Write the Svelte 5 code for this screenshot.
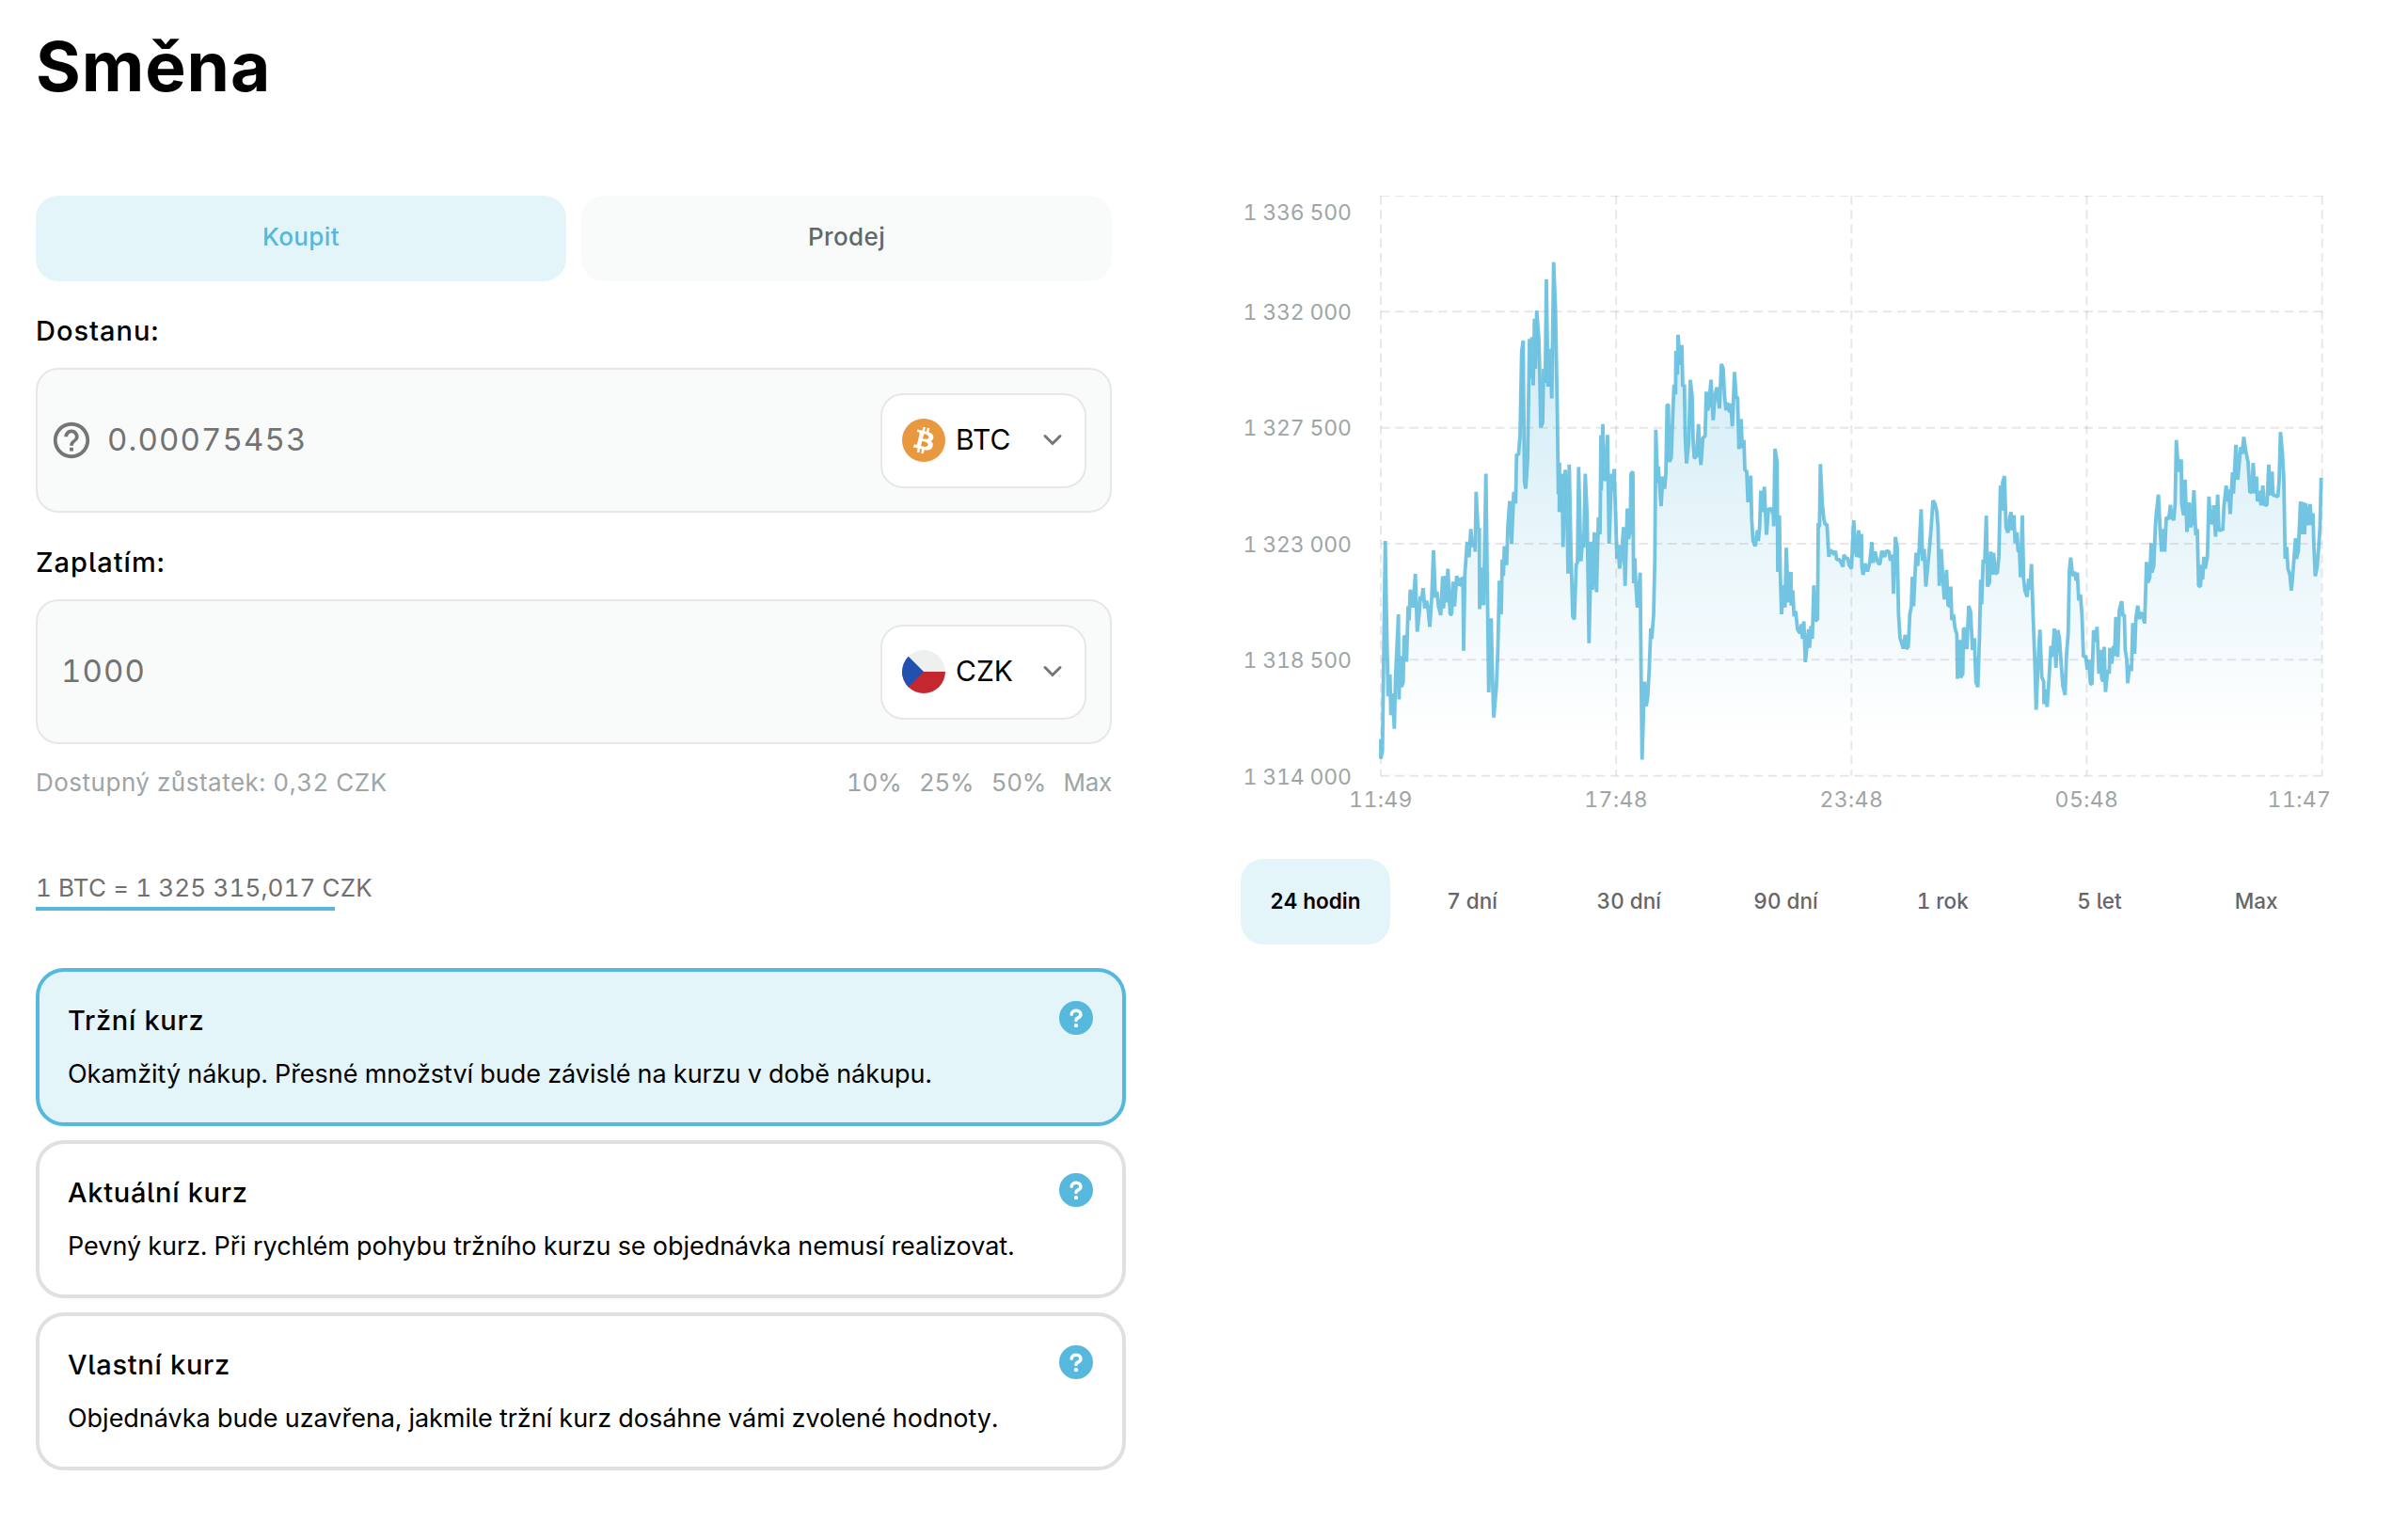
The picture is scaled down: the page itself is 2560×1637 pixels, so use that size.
<script>
	const options = [
		{
			id: 'market',
			title: 'Tržní kurz',
			text: 'Okamžitý nákup. Přesné množství bude závislé na kurzu v době nákupu.',
		},
		{
			id: 'current',
			title: 'Aktuální kurz',
			text: 'Pevný kurz. Při rychlém pohybu tržního kurzu se objednávka nemusí realizovat.',
		},
		{
			id: 'custom',
			title: 'Vlastní kurz',
			text: 'Objednávka bude uzavřena, jakmile tržní kurz dosáhne vámi zvolené hodnoty.',
		},
	];
	const ranges = ['24 hodin', '7 dní', '30 dní', '90 dní', '1 rok', '5 let', 'Max'];
	const shares = ['10%', '25%', '50%', 'Max'];

	let side = $state('buy');
	let option = $state('market');
	let range = $state('24 hodin');

	// plot area inside the chart svg
	const LEFT = 149;
	const WIDTH = 1000.7;
	const HEIGHT = 616.7;

	const yTicks = [
		{ label: '1 336 500', y: 0, textY: 26 },
		{ label: '1 332 000', y: 123.3, textY: 132.3 },
		{ label: '1 327 500', y: 246.7, textY: 255.3 },
		{ label: '1 323 000', y: 370, textY: 379 },
		{ label: '1 318 500', y: 493.3, textY: 502 },
		{ label: '1 314 000', y: 616.7, textY: 626 },
	];
	const xTicks = [
		{ label: '11:49', x: 0, textX: 0 },
		{ label: '17:48', x: 250.2, textX: 250.2 },
		{ label: '23:48', x: 500.3, textX: 500.3 },
		{ label: '05:48', x: 750.5, textX: 750.5 },
		{ label: '11:47', x: 1000.7, textX: 976.5 },
	];

	// samples of the last 24 hours, in four parts: x,y on a 3002 x 1465 grid
	const parts = [
		{
			start: -84,
			points:
				'84,1415 84,1465 89,1445 98,915 102,1100 107,1307 113,1252 116,1355 122,1300 127,1389 131,1255 140,1100 142,1315 146,1205 150,1283 155,1272 158,1155 162,1157 166,1220 171,1080 174,1115 178,1038 187,1083 194,998 200,1144 206,1100 210,1055 214,1065 219,1034 224,1085 230,1066 235,1088 240,1132 246,1062 252,938 258,1058 263,1043 268,1080 275,1102 281,1004 284,1085 289,1003 293,1070 298,985 305,1100 310,1100 314,1018 319,1080 326,1003 333,1028 338,1008 342,1030 346,1005 348,1192 352,1000 359,917 365,956 371,885 376,930 383,915 385,942 388,791 394,885 398,882 399,1087 407,982 412,1077 419,745 424,1040 428,1297 436,1110 440,1260 444,1361 452,1288 457,1198 462,1015 468,1100 471,962 475,1003 478,928 485,976 489,880 495,814 501,922 508,791 514,820 517,695 523,698 528,650 533,437 538,409 542,765 546,783 552,710 558,405 563,505 566,400 570,522 574,354 577,480 581,333 588,405 590,465 594,628 600,617 603,480 608,515 612,254 617,525 624,430 629,555 635,211 641,330 647,600 650,797 654,717 653,842 662,745 665,930 672,735 677,800 681,997 685,722 690,930 696,1105 701,1113 707,975 711,970 715,728 722,966 728,900 731,932 736,745 742,850 748,1173 755,917 759,1038 765,893 772,1044 778,855 783,898 786,648',
		},
		{
			start: 696,
			points:
				'7,787 12,620 15,745 20,763 27,647 32,922 40,745 44,788 48,733 53,850 57,960 62,925 65,985 71,955 78,880 83,1028 90,833 94,910 99,890 102,745 108,740 110,1022 114,958 117,1020 122,1083 131,995 134,1250 137,1467 145,1270 150,1332 155,1310 160,1240 165,1135 168,1162 174,1100 178,960 181,634 187,768 189,727 193,770 198,827 203,752 209,783 213,745 217,573 221,570 224,715 230,705 235,600 239,520 244,545 245,435 250,495 252,394 258,470 264,420 267,525 272,520 275,660 279,719 286,665 291,508 297,550 300,660 304,706 311,700 317,620 321,690 325,723 331,655 338,650 342,538 346,585 350,575 357,508 364,610 370,545 376,527 384,580 390,468 396,480 400,545 405,585 410,566 417,590 420,568 425,625 432,488 437,550 442,553 446,683 453,607 457,680 462,660 465,735 471,740 475,817 484,750 487,860 491,915 498,928 505,888 508,915 512,880 516,788 521,842 527,778 534,899 540,835 549,833 556,850 557,878 561,682 568,714 570,993 575,850 578,1000 582,1100 588,1027 593,1083 597,932 604,1070 612,993 613,1078 618,1040 622,1105 627,1092 633,1138 641,1148 645,1125 649,1162 653,1118 658,1221 668,1138 671,1185 676,1130 680,1162 685,1027 690,1117 697,1112 699,870 703,880 706,721 712,820 717,860 721,873 727,873 733,955 738,938 744,942 750,950 754,940 758,962 767,962 778,980 781,950 788,960 793,957 797,975',
		},
		{
			start: 1476,
			points:
				'25,985 32,863 39,945 42,955 48,888 52,957 57,897 58,980 62,1000 68,972 76,992 83,970 90,918 94,970 100,942 107,965 115,975 122,940 130,955 136,940 145,942 149,965 156,950 159,1048 165,905 171,930 175,1100 180,1160 186,1175 190,1187 196,1152 200,1187 206,1182 211,1100 216,1080 219,1005 223,1080 231,945 236,978 241,930 247,835 252,965 257,935 262,1030 270,965 275,920 280,870 285,813 291,820 297,840 301,880 305,1028 311,935 316,1005 321,1062 328,988 333,1077 338,1080 342,1030 345,1115 350,1100 355,1135 361,1150 363,1263 370,1165 373,1260 380,1250 382,1136 388,1138 393,1188 399,1079 405,1095 411,1190 417,1160 422,1272 428,1284 433,1160 437,1013 440,1075 445,962 450,970 455,851 459,1030 465,1020 469,942 474,1000 478,945 484,998 490,995 495,955 500,775 505,838 507,767 513,751 518,880 524,894 530,855 534,842 537,888 543,850 547,920 553,893 556,940 561,942 564,1007 570,850 574,1010 578,1040 585,1056 590,1010 594,1038 599,973 604,1100 609,1200 614,1341 620,1225 626,1139 632,1258 638,1270 639,1327 644,1290 649,1334 655,1260 661,1180 666,1207 672,1136 677,1235 683,1140 688,1160 693,1215 699,1280 706,1304 711,1200 716,1150 720,990 724,957 730,1003 736,993 742,1015 745,995 750,1065 755,1050 760,1100 765,1208 772,1205 777,1240 782,1215 787,1275',
		},
		{
			start: 2256,
			points:
				'12,1277 17,1140 22,1170 28,1132 34,1250 41,1190 43,1262 48,1270 51,1182 55,1296 62,1240 67,1250 69,1185 75,1225 81,1180 84,1205 88,1107 94,1208 99,1090 107,1067 111,1105 115,1100 118,1190 123,1215 126,1274 132,1228 138,1243 142,1122 148,1200 152,1110 158,1078 163,1112 168,1095 174,1105 180,1123 186,968 190,1020 196,1008 201,920 203,995 209,978 214,880 217,845 224,798 229,880 234,942 240,885 244,942 249,855 257,860 262,824 266,855 273,862 277,820 281,660 288,740 297,709 298,820 304,850 309,760 315,892 322,818 327,880 331,870 337,787 343,900 348,885 352,1028 358,1030 362,975 365,1012 369,955 373,985 380,955 385,803 390,868 397,870 400,825 406,904 413,798 417,890 423,885 429,888 433,825 440,775 446,815 448,785 453,847 460,742 463,795 471,672 477,760 486,678 491,695 496,652 503,690 510,715 516,793 522,790 526,718 532,795 537,752 540,815 547,788 551,825 557,775 561,822 570,825 576,722 580,800 586,740 590,800 597,800 605,803 609,760 613,640 619,690 624,760 628,960 633,930 637,985 643,1000 648,1040 654,985 661,908 664,960 670,940 677,815 682,898 687,817 690,898 694,820 700,875 708,822 712,875 717,845 720,930 724,1004 730,980 735,930 739,880 743,755',
		},
	];

	const coords = parts.flatMap((part) =>
		part.points.split(' ').map((p) => {
			const [x, y] = p.split(',').map(Number);
			return [((x + part.start) * WIDTH) / 3002, ((y - 43) * HEIGHT) / 1465];
		})
	);
	const line = 'M' + coords.map(([x, y]) => `${x.toFixed(1)} ${y.toFixed(1)}`).join('L');
	const area = `${line}L${WIDTH} ${HEIGHT}L0 ${HEIGHT}Z`;
</script>

{#snippet chevron()}
	<svg class="chevron" width="22" height="16" viewBox="0 0 22 16" aria-hidden="true">
		<path d="M3 3.5 L11 11.5 L19 3.5" />
	</svg>
{/snippet}

<main>
	<h1>Směna</h1>

	<div class="columns">
		<section class="exchange">
			<div class="tabs">
				<button class:active={side === 'buy'} onclick={() => (side = 'buy')}>Koupit</button>
				<button class:active={side === 'sell'} onclick={() => (side = 'sell')}>Prodej</button>
			</div>

			<div class="label">Dostanu:</div>
			<div class="field with-help">
				<svg class="help" width="46" height="46" viewBox="0 0 24 24" aria-hidden="true">
					<path
						d="M11 18h2v-2h-2v2zm1-16C6.48 2 2 6.48 2 12s4.48 10 10 10 10-4.48 10-10S17.52 2 12 2zm0 18c-4.41 0-8-3.59-8-8s3.59-8 8-8 8 3.59 8 8-3.59 8-8 8zm0-14c-2.21 0-4 1.79-4 4h2c0-1.1.9-2 2-2s2 .9 2 2c0 2-3 1.75-3 5h2c0-2.25 3-2.5 3-5 0-2.21-1.79-4-4-4z"
					/>
				</svg>
				<span class="amount">0.00075453</span>
				<button class="currency">
					<svg width="46" height="46" viewBox="0 0 32 32" aria-hidden="true">
						<circle cx="16" cy="16" r="16" fill="#e8983e" />
						<path
							fill="#fff"
							d="M23.189 14.02c.314-2.096-1.283-3.223-3.465-3.975l.708-2.84-1.728-.43-.69 2.765c-.454-.114-.92-.22-1.385-.326l.695-2.783L15.596 6l-.708 2.839c-.376-.086-.746-.17-1.104-.26l.002-.009-2.384-.595-.46 1.846s1.283.294 1.256.312c.7.175.826.638.805 1.006l-.806 3.235c.048.012.11.03.18.057l-.183-.045-1.13 4.532c-.086.212-.303.531-.793.41.018.025-1.256-.313-1.256-.313l-.858 1.978 2.25.561c.418.105.828.215 1.231.318l-.715 2.872 1.727.43.708-2.84c.472.127.93.245 1.378.357l-.706 2.828 1.728.43.715-2.866c2.948.558 5.164.333 6.097-2.333.752-2.146-.037-3.385-1.588-4.192 1.13-.26 1.98-1.003 2.207-2.538zm-3.95 5.538c-.533 2.147-4.148.986-5.32.695l.95-3.805c1.172.293 4.929.872 4.37 3.11zm.535-5.569c-.487 1.953-3.495.96-4.47.717l.86-3.45c.975.243 4.118.696 3.61 2.733z"
						/>
					</svg>
					<span>BTC</span>
					{@render chevron()}
				</button>
			</div>

			<div class="label">Zaplatím:</div>
			<div class="field">
				<span class="amount">1000</span>
				<button class="currency">
					<svg width="46" height="46" viewBox="0 0 46 46" aria-hidden="true">
						<clipPath id="flag"><circle cx="23" cy="23" r="23" /></clipPath>
						<g clip-path="url(#flag)">
							<rect width="46" height="23" fill="#eef0f0" />
							<rect y="23" width="46" height="23" fill="#c4282f" />
							<path d="M0 0 L23 23 L0 46 Z" fill="#2250ae" />
						</g>
					</svg>
					<span>CZK</span>
					{@render chevron()}
				</button>
			</div>

			<div class="info">
				<span>Dostupný zůstatek: 0,32 CZK</span>
				<div class="shares">
					{#each shares as share}
						<span>{share}</span>
					{/each}
				</div>
			</div>

			<div class="rate">1 BTC = 1 325 315,017 CZK</div>
			<div class="countdown"></div>

			<div class="options">
				{#each options as o (o.id)}
					<div class="option" class:selected={option === o.id}>
						<div class="option-head">
							<h2>{o.title}</h2>
							<svg width="36" height="36" viewBox="0 0 36 36" aria-hidden="true">
								<circle cx="18" cy="18" r="18" fill="#55b8dc" />
								<path
									d="M13.2 14.2 C13.6 8.8 22.9 9 22.9 14.4 C22.9 18.2 18 17.6 18 20.4"
									fill="none"
									stroke="#fff"
									stroke-width="3.6"
									stroke-linecap="round"
								/>
								<circle cx="18" cy="26.1" r="2.2" fill="#fff" />
							</svg>
						</div>
						<p>{o.text}</p>
					</div>
				{/each}
			</div>
		</section>

		<section class="history">
			<svg class="chart" width="1159" height="668" viewBox="0 0 1159 668">
				<defs>
					<linearGradient id="fill" gradientUnits="userSpaceOnUse" x1="0" y1="71" x2="0" y2="575">
						<stop offset="0" stop-color="#55b8dc" stop-opacity="0.32" />
						<stop offset="1" stop-color="#55b8dc" stop-opacity="0" />
					</linearGradient>
				</defs>
				{#each yTicks as t}
					<text class="y-label" x="2.4" y={t.textY}>{t.label}</text>
				{/each}
				{#each xTicks as t}
					<text x={LEFT + t.textX} y="650" text-anchor="middle">{t.label}</text>
				{/each}
				<g transform="translate({LEFT} 0)">
					<path d={area} fill="url(#fill)" />
					{#each yTicks as t}
						<line class="grid" x1="0" x2={WIDTH} y1={t.y} y2={t.y} />
					{/each}
					{#each xTicks as t}
						<line class="grid" x1={t.x} x2={t.x} y1="0" y2={HEIGHT} />
					{/each}
					<path class="line" d={line} />
				</g>
			</svg>

			<div class="ranges">
				{#each ranges as r}
					<button class:active={range === r} onclick={() => (range = r)}>{r}</button>
				{/each}
			</div>
		</section>
	</div>
</main>

<style>
	:global(body) {
		margin: 0;
		background: #fff;
	}

	main {
		box-sizing: border-box;
		width: 2560px;
		height: 1637px;
		padding: 27px 38px 0;
		overflow: hidden;
		font-family: Inter, 'Liberation Sans', sans-serif;
		font-feature-settings: 'cv05', 'tnum';
		color: #000;
	}

	h1 {
		margin: 0 0 93px;
		font-size: 73px;
		line-height: 88px;
		font-weight: 700;
		letter-spacing: 0.9px;
	}

	button {
		padding: 0;
		border: 0;
		font: inherit;
		font-feature-settings: inherit;
		color: inherit;
		background: none;
	}

	.columns {
		display: flex;
		gap: 122px;
	}

	.exchange {
		width: 1159px;
	}

	.tabs {
		display: grid;
		grid-template-columns: 1fr 1fr;
		gap: 16px;
		width: 1144px;
	}

	.tabs button {
		height: 91px;
		padding-bottom: 4px;
		border-radius: 24px;
		background: #f9fbfa;
		color: #666;
		font-size: 26px;
		font-weight: 500;
		letter-spacing: 0.4px;
	}

	.tabs button.active {
		background: #e4f5fa;
		color: #55b8dc;
	}

	.label {
		margin: 35px 0 21px;
		font-size: 29px;
		line-height: 36px;
		font-weight: 500;
		letter-spacing: 1px;
	}

	.field {
		box-sizing: border-box;
		display: flex;
		align-items: center;
		width: 1144px;
		height: 154px;
		padding: 0 25px;
		border: 2px solid #e6e7e6;
		border-radius: 24px;
		background: #f9fbfa;
	}

	.field.with-help {
		padding-left: 13px;
	}

	.help {
		margin-right: 15px;
		fill: #757575;
	}

	.amount {
		flex: 1;
		padding-bottom: 3px;
		font-size: 33px;
		letter-spacing: 1.1px;
		color: #737373;
	}

	.currency {
		box-sizing: border-box;
		display: flex;
		align-items: center;
		width: 219px;
		height: 101px;
		padding: 0 23px 0 21px;
		border: 2px solid #e6e7e6;
		border-radius: 24px;
		background: #fff;
		font-size: 30px;
	}

	.currency span {
		flex: 1;
		padding: 0 0 2px 11px;
		text-align: left;
	}

	.chevron path {
		fill: none;
		stroke: #757575;
		stroke-width: 3;
		stroke-linecap: round;
	}

	.info {
		display: flex;
		justify-content: space-between;
		width: 1144px;
		margin-top: 25px;
		font-size: 26px;
		line-height: 32px;
		letter-spacing: 0.5px;
		color: #9da5a5;
	}

	.shares {
		display: flex;
		gap: 18.5px;
		letter-spacing: -0.3px;
	}

	.rate {
		margin-top: 80px;
		font-size: 26px;
		line-height: 32px;
		letter-spacing: 0.13px;
		color: #6f6f6f;
	}

	.countdown {
		width: 318px;
		height: 4px;
		margin: 4px 0 61px;
		background: #55b8dc;
	}

	.options {
		display: flex;
		flex-direction: column;
		gap: 15px;
	}

	.option {
		box-sizing: border-box;
		height: 168px;
		padding: 31px 31px 0 30px;
		border: 4px solid #e0e0e0;
		border-radius: 30px;
	}

	.option.selected {
		border-color: #55b8dc;
		background: #e4f5fa;
	}

	.option-head {
		display: flex;
		justify-content: space-between;
	}

	.option h2 {
		margin: 3px 0 0;
		font-size: 29px;
		line-height: 36px;
		font-weight: 500;
		letter-spacing: 0.7px;
	}

	.option p {
		margin: 23px 0 0;
		font-size: 27px;
		line-height: 32px;
		letter-spacing: -0.03px;
		white-space: nowrap;
	}

	.history {
		width: 1159px;
	}

	.chart {
		display: block;
		margin-bottom: 37px;
	}

	.chart text {
		font-size: 23px;
		letter-spacing: 0.4px;
		fill: #9da5a5;
	}

	.chart .y-label {
		letter-spacing: -0.15px;
	}

	.grid {
		stroke: #9a9a9a;
		stroke-opacity: 0.24;
		stroke-width: 1.9;
		stroke-dasharray: 9.53 5.72;
	}

	.line {
		fill: none;
		stroke: #55b8dc;
		stroke-opacity: 0.82;
		stroke-width: 3.8;
		stroke-linejoin: bevel;
	}

	.ranges {
		display: grid;
		grid-template-columns: repeat(7, 1fr);
		gap: 8px;
	}

	.ranges button {
		height: 91px;
		padding-bottom: 2px;
		border-radius: 24px;
		font-size: 22.5px;
		font-weight: 500;
		color: #666;
	}

	.ranges button.active {
		background: #e4f5fa;
		color: #000;
		font-weight: 600;
	}
</style>
